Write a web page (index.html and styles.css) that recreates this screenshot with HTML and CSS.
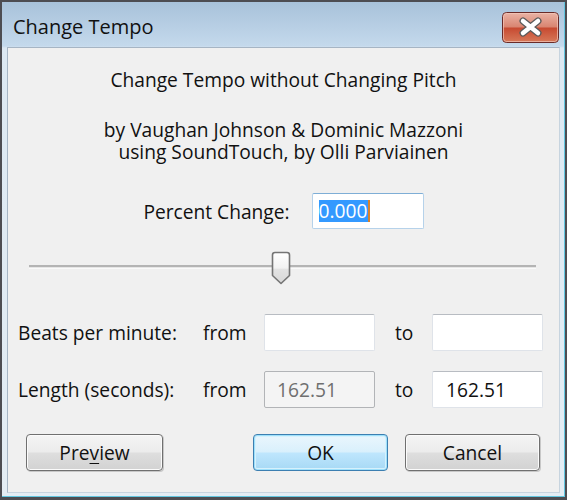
FILE: index.html
```html
<!DOCTYPE html>
<html>
<head>
<meta charset="utf-8">
<link rel="stylesheet" href="styles.css">
</head>
<body>
<div class="window">
  <div class="titlebar">
    <div class="title">Change Tempo</div>
    <div class="close">
      <svg width="57" height="31" viewBox="0 0 57 31">
        <defs>
          <linearGradient id="cg" x1="0" y1="0" x2="0" y2="1">
            <stop offset="0" stop-color="#eab4a6"/>
            <stop offset="0.48" stop-color="#d98571"/>
            <stop offset="0.52" stop-color="#c74a31"/>
            <stop offset="1" stop-color="#d77a5a"/>
          </linearGradient>
        </defs>
        <rect x="0.5" y="0.5" width="56" height="30" rx="4" fill="url(#cg)" stroke="#6a2b28"/>
        <rect x="1.5" y="1.5" width="54" height="28" rx="3" fill="none" stroke="#f2c7bb" stroke-opacity="0.7"/>
        <path d="M21 9 L36 21 M36 9 L21 21" stroke="#5a5a5a" stroke-width="7" stroke-linecap="round"/>
        <path d="M21 9 L36 21 M36 9 L21 21" stroke="#ffffff" stroke-width="4.5" stroke-linecap="round"/>
      </svg>
    </div>
  </div>
  <div class="client">
    <div class="heading">Change Tempo without Changing Pitch</div>
    <div class="credits">
      <div class="line">by Vaughan Johnson &amp; Dominic Mazzoni</div>
      <div class="line">using SoundTouch, by Olli Parviainen</div>
    </div>
    <div class="percent-row">
      <span class="label">Percent Change:</span>
      <div class="field focused"><span class="sel">0.000</span><span class="caret"></span></div>
    </div>
    <div class="slider">
      <div class="track"></div>
      <svg class="thumb" width="20" height="34" viewBox="0 0 20 34">
        <defs>
          <linearGradient id="tg" x1="0" y1="0" x2="0" y2="1">
            <stop offset="0" stop-color="#ffffff"/>
            <stop offset="0.5" stop-color="#f2f2f2"/>
            <stop offset="0.55" stop-color="#e2e2e2"/>
            <stop offset="1" stop-color="#d8d8d8"/>
          </linearGradient>
        </defs>
        <path d="M1.5 4 Q1.5 1.5 4 1.5 H16 Q18.5 1.5 18.5 4 V24.5 L10 32.5 L1.5 24.5 Z" fill="url(#tg)" stroke="#747474" stroke-width="1.6" stroke-linejoin="round"/>
      </svg>
    </div>
    <div class="grid">
      <span class="label">Beats per minute:</span>
      <span class="word">from</span>
      <div class="field"></div>
      <span class="word to">to</span>
      <div class="field"></div>

      <span class="label">Length (seconds):</span>
      <span class="word">from</span>
      <div class="field disabled">162.51</div>
      <span class="word to">to</span>
      <div class="field">162.51</div>
    </div>
    <div class="buttons">
      <button class="btn preview">Pre<u>v</u>iew</button>
      <div class="spacer"></div>
      <button class="btn default">OK</button>
      <button class="btn">Cancel</button>
    </div>
  </div>
</div>
</body>
</html>
```

FILE: styles.css
```css
* { box-sizing: border-box; }
html, body { margin: 0; padding: 0; }
body {
  width: 567px;
  height: 500px;
  background: #4a4a4a;
  font-family: "Open Sans", "Noto Sans", sans-serif;
  color: #111;
}
.window {
  width: 567px;
  height: 500px;
  border: 2px solid #4d4d52;
  border-bottom-width: 3px;
  background: linear-gradient(#a8c2da 0px, #c4d9ec 44px, #dce8f2 46px, #e4edf4 100%);
  display: flex;
  flex-direction: column;
  padding: 0 3px 0 5px;
  box-shadow: inset -1px -1px 0 #62c6e0;
}
.titlebar {
  height: 45px;
  display: flex;
  align-items: center;
  justify-content: space-between;
  padding-left: 6px;
  padding-right: 3px;
  flex: none;
}
.title {
  font-size: 20px;
  color: #111;
  margin-top: 3px;
}
.close {
  width: 57px;
  height: 31px;
  margin-top: 6px;
  line-height: 0;
}
.client {
  flex: none;
  height: 446px;
  margin-right: 2px;
  background: #f0f0f0;
  border: 1px solid #a6b5c4;
  border-right-color: #c7d4df;
  border-bottom-color: #c7d4df;
  display: flex;
  flex-direction: column;
  font-size: 19.2px;
}
.heading {
  text-align: center;
  line-height: 22px;
  margin-top: 21px;
}
.credits {
  text-align: center;
  margin-top: 28px;
}
.credits .line {
  height: 22px;
  line-height: 22px;
}
.percent-row {
  display: flex;
  justify-content: center;
  align-items: center;
  gap: 22px;
  margin-top: 30px;
}
.field {
  width: 111px;
  height: 37px;
  background: #fff;
  border: 1px solid #dfe3e9;
  border-top-color: #b8bcc2;
  border-radius: 2px;
  display: flex;
  align-items: center;
  padding-left: 13px;
  line-height: 22px;
}
.field.focused {
  width: 112px;
  height: 36px;
  border: 1px solid #b6d2ea;
  border-top-color: #7eaed6;
  padding-left: 6px;
}
.sel {
  background: #3399ff;
  color: #fff;
  line-height: 22px;
}
.caret {
  width: 2px;
  height: 22px;
  background: #d9822b;
}
.field.disabled {
  background: #f4f4f4;
  border-color: #b2b4b7;
  color: #6f6f6f;
  padding-left: 12px;
}
.slider {
  position: relative;
  height: 34px;
  margin: 22px 23px 0 21px;
}
.track {
  position: relative;
  top: 14px;
  height: 4px;
  background: #e6e6e6;
  border-top: 2px solid #b4b4b4;
  border-bottom: 1px solid #fafafa;
}
.thumb {
  position: absolute;
  top: 0;
  left: 242px;
}
.grid {
  display: grid;
  grid-template-columns: 185px 61px 111px 57px 111px;
  grid-auto-rows: 37px;
  row-gap: 20px;
  align-items: center;
  margin-top: 29px;
  margin-left: 10px;
}
.word.to { padding-left: 20px; }
.buttons {
  display: flex;
  align-items: center;
  margin-top: 26px;
  padding-left: 18px;
  padding-right: 19px;
  gap: 17px;
}
.spacer { flex: 1; margin-right: -17px; }
.btn {
  font-family: "Open Sans", "Noto Sans", sans-serif;
  font-size: 19.2px;
  color: #111;
  width: 135px;
  height: 37px;
  padding: 0;
  border: 1px solid #707070;
  border-radius: 4px;
  background: linear-gradient(#f4f4f4 0%, #ececec 48%, #dedede 52%, #d2d2d2 100%);
  box-shadow: inset 0 0 0 1px #fbfbfb, 1px 1px 0 #c8c8c8;
}
.btn.preview { width: 137px; }
.btn u { text-decoration-thickness: 1px; text-underline-offset: 3px; }
.btn.default {
  border-color: #3c7fb1;
  background: linear-gradient(#eaf6fd 0%, #d9f0fc 48%, #bee6fd 52%, #a7d9f5 100%);
  box-shadow: inset 0 0 0 1px #9ee0fb, inset 0 0 0 2px #d6f1fc;
}
```
